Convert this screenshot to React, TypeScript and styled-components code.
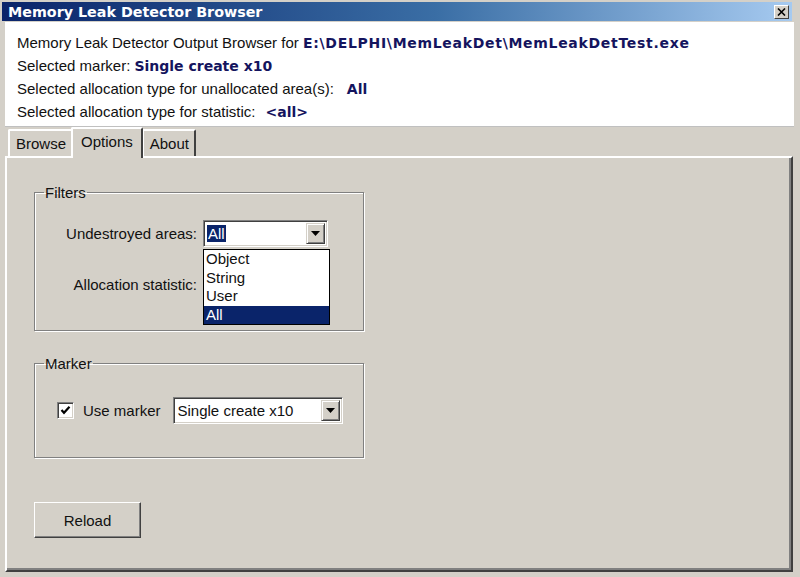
import React from "react";
import styled, { createGlobalStyle } from "styled-components";

const Global = createGlobalStyle`
  html, body { margin: 0; padding: 0; background: #d4d0c8; }
  body { font-family: "Liberation Sans", Arial, sans-serif; font-size: 15px; color: #000; }
  * { box-sizing: border-box; }
`;

const Frame = styled.div`
  width: 800px;
  height: 577px;
  background: #d4d0c8;
  display: flex;
  flex-direction: column;
  padding: 2px 4px 0 2px;
  overflow: hidden;
`;

const TitleBar = styled.div`
  height: 19px;
  margin-right: 4px;
  background: linear-gradient(to right, #0a246a 0%, #3a6ea5 55%, #a6caf0 100%);
  display: flex;
  align-items: center;
  justify-content: space-between;
  padding: 0 3px 0 6px;
`;

const TitleText = styled.span`
  font-family: "DejaVu Sans", Verdana, sans-serif;
  font-weight: bold;
  font-size: 14.3px;
  color: #fff;
`;

const CloseBtn = styled.div`
  width: 15px;
  height: 14px;
  background: #d4d0c8;
  border-top: 1px solid #fff;
  border-left: 1px solid #fff;
  border-right: 1px solid #404040;
  border-bottom: 1px solid #404040;
  display: flex;
  align-items: center;
  justify-content: center;
`;

const Header = styled.div`
  background: #fff;
  margin: 1px 2px 0 3px;
  padding: 9px 0 3px 12px;
  border-bottom: 1px solid #c0c0c0;
  display: flex;
  flex-direction: column;
`;

const HeaderLine = styled.div`
  height: 23px;
  line-height: 23px;
  white-space: nowrap;
  color: #111;
`;

const Value = styled.span<{ $gap?: number; $wide?: boolean }>`
  font-family: "DejaVu Sans", Verdana, sans-serif;
  font-weight: bold;
  font-size: 14px;
  color: #14145e;
  margin-left: ${(p) => p.$gap ?? 0}px;
  letter-spacing: ${(p) => (p.$wide ? "0.7px" : "0")};
`;

const TabStrip = styled.div`
  height: 29px;
  display: flex;
  align-items: flex-end;
  padding-left: 3px;
  margin-left: 3px;
  position: relative;
  z-index: 2;
`;

const Tab = styled.div<{ $active?: boolean }>`
  height: ${(p) => (p.$active ? 31 : 27)}px;
  padding: ${(p) => (p.$active ? "0 8px 4px 8px" : "0 5px 0 6px")};
  margin: ${(p) => (p.$active ? "0 -1px -2px -2px" : "0")};
  display: flex;
  align-items: center;
  background: #d4d0c8;
  border-top: 2px solid #fff;
  border-left: 2px solid #fff;
  border-right: 2px solid #404040;
  border-top-left-radius: 2px;
  border-top-right-radius: 2px;
  font-size: 15px;
  color: #111;
  position: relative;
  z-index: ${(p) => (p.$active ? 3 : 1)};
`;

const Sheet = styled.div`
  flex: 1;
  margin: 0 3px 5px 3px;
  border-top: 2px solid #fff;
  border-left: 2px solid #fff;
  border-right: 2px solid #404040;
  border-bottom: 2px solid #404040;
  box-shadow: inset -2px -2px 0 #808080;
  display: flex;
  flex-direction: column;
  padding: 26px 0 0 27px;
  position: relative;
  z-index: 1;
`;

const Group = styled.fieldset<{ $h: number }>`
  width: 330px;
  height: ${(p) => p.$h}px;
  margin: 0;
  padding: 0;
  border: 1px solid #808080;
  box-shadow: 1px 1px 0 #fff, inset 1px 1px 0 #fff;
  min-width: 0;
`;

const Legend = styled.legend`
  margin-left: 9px;
  padding: 0 1px;
  font-size: 15px;
  line-height: 17px;
  color: #111;
`;

const FilterGrid = styled.div`
  display: grid;
  grid-template-columns: 162px 125px;
  column-gap: 6px;
  row-gap: 24px;
  align-items: center;
  padding-top: 19px;
`;

const FieldLabel = styled.span`
  text-align: right;
  color: #111;
  white-space: nowrap;
`;

const ComboWrap = styled.div`
  position: relative;
`;

const Combo = styled.div<{ $w: number }>`
  width: ${(p) => p.$w}px;
  height: 27px;
  background: #fff;
  border-top: 1px solid #808080;
  border-left: 1px solid #808080;
  border-right: 1px solid #fff;
  border-bottom: 1px solid #fff;
  box-shadow: inset 1px 1px 0 #404040, inset -1px -1px 0 #d4d0c8;
  display: flex;
  align-items: center;
  padding: 2px;
`;

const ComboText = styled.span<{ $sel?: boolean }>`
  flex: 1;
  font-size: 15px;
  line-height: 19px;
  color: #111;
  padding-left: 1px;
  white-space: nowrap;
  & > em {
    font-style: normal;
    background: ${(p) => (p.$sel ? "#0a246a" : "transparent")};
    color: ${(p) => (p.$sel ? "#fff" : "#111")};
    padding: 0 1px;
  }
`;

const ArrowBtn = styled.div`
  width: 19px;
  height: 21px;
  background: #d4d0c8;
  border-top: 1px solid #d4d0c8;
  border-left: 1px solid #d4d0c8;
  border-right: 1px solid #404040;
  border-bottom: 1px solid #404040;
  box-shadow: inset 1px 1px 0 #fff, inset -1px -1px 0 #808080;
  display: flex;
  align-items: center;
  justify-content: center;
`;

const DropList = styled.div`
  position: absolute;
  left: 0;
  top: 29px;
  width: 127px;
  background: #fff;
  border: 1px solid #000;
  z-index: 5;
`;

const DropItem = styled.div<{ $sel?: boolean }>`
  height: 18.5px;
  line-height: 18.5px;
  padding-left: 2px;
  font-size: 15px;
  background: ${(p) => (p.$sel ? "#0a246a" : "#fff")};
  color: ${(p) => (p.$sel ? "#fff" : "#111")};
`;

const Spacer = styled.div<{ $h: number }>`
  height: ${(p) => p.$h}px;
  flex: none;
`;

const MarkerRow = styled.div`
  display: flex;
  align-items: center;
  padding: 25px 0 0 22px;
`;

const CheckBox = styled.div`
  width: 17px;
  height: 17px;
  background: #fff;
  border-top: 1px solid #808080;
  border-left: 1px solid #808080;
  border-right: 1px solid #fff;
  border-bottom: 1px solid #fff;
  box-shadow: inset 1px 1px 0 #404040, inset -1px -1px 0 #d4d0c8;
  display: flex;
  align-items: center;
  justify-content: center;
`;

const CheckLabel = styled.span`
  margin: 0 12px 0 9px;
  color: #111;
`;

const Button = styled.div`
  width: 107px;
  height: 36px;
  margin-top: -2px;
  background: #d4d0c8;
  border-top: 1px solid #fff;
  border-left: 1px solid #fff;
  border-right: 1px solid #404040;
  border-bottom: 1px solid #404040;
  box-shadow: inset -1px -1px 0 #808080;
  display: flex;
  align-items: center;
  justify-content: center;
  font-size: 15px;
  color: #111;
`;

const Arrow = () => (
  <svg width="9" height="5" viewBox="0 0 9 5">
    <path d="M0 0 H9 L4.5 5 Z" fill="#000" />
  </svg>
);

export default function App() {
  return (
    <>
      <Global />
      <Frame>
        <TitleBar>
          <TitleText>Memory Leak Detector Browser</TitleText>
          <CloseBtn>
            <svg width="9" height="8" viewBox="0 0 9 8">
              <path d="M1 0.5 L8 7.5 M8 0.5 L1 7.5" stroke="#000" strokeWidth="1.6" />
            </svg>
          </CloseBtn>
        </TitleBar>
        <Header>
          <HeaderLine>
            Memory Leak Detector Output Browser for{" "}
            <Value $wide>{"E:\\DELPHI\\MemLeakDet\\MemLeakDetTest.exe"}</Value>
          </HeaderLine>
          <HeaderLine>
            Selected marker:<Value $gap={4}>Single create x10</Value>
          </HeaderLine>
          <HeaderLine>
            Selected allocation type for unallocated area(s):<Value $gap={13}>All</Value>
          </HeaderLine>
          <HeaderLine>
            Selected allocation type for statistic:<Value $gap={10}>&lt;all&gt;</Value>
          </HeaderLine>
        </Header>
        <TabStrip>
          <Tab>Browse</Tab>
          <Tab $active>Options</Tab>
          <Tab>About</Tab>
        </TabStrip>
        <Sheet>
          <Group $h={147}>
            <Legend>Filters</Legend>
            <FilterGrid>
              <FieldLabel>Undestroyed areas:</FieldLabel>
              <ComboWrap>
                <Combo $w={125}>
                  <ComboText $sel>
                    <em>All</em>
                  </ComboText>
                  <ArrowBtn>
                    <Arrow />
                  </ArrowBtn>
                </Combo>
                <DropList>
                  <DropItem>Object</DropItem>
                  <DropItem>String</DropItem>
                  <DropItem>User</DropItem>
                  <DropItem $sel>All</DropItem>
                </DropList>
              </ComboWrap>
              <FieldLabel>Allocation statistic:</FieldLabel>
              <ComboWrap>
                <Combo $w={125}>
                  <ComboText />
                  <ArrowBtn>
                    <Arrow />
                  </ArrowBtn>
                </Combo>
              </ComboWrap>
            </FilterGrid>
          </Group>
          <Spacer $h={24} />
          <Group $h={103}>
            <Legend>Marker</Legend>
            <MarkerRow>
              <CheckBox>
                <svg width="11" height="11" viewBox="0 0 11 11">
                  <path d="M1.5 5 L4 7.8 L9.5 1.8" stroke="#000" strokeWidth="2.2" fill="none" />
                </svg>
              </CheckBox>
              <CheckLabel>Use marker</CheckLabel>
              <Combo $w={170}>
                <ComboText>
                  <em>Single create x10</em>
                </ComboText>
                <ArrowBtn>
                  <Arrow />
                </ArrowBtn>
              </Combo>
            </MarkerRow>
          </Group>
          <Spacer $h={46} />
          <Button>Reload</Button>
        </Sheet>
      </Frame>
    </>
  );
}
